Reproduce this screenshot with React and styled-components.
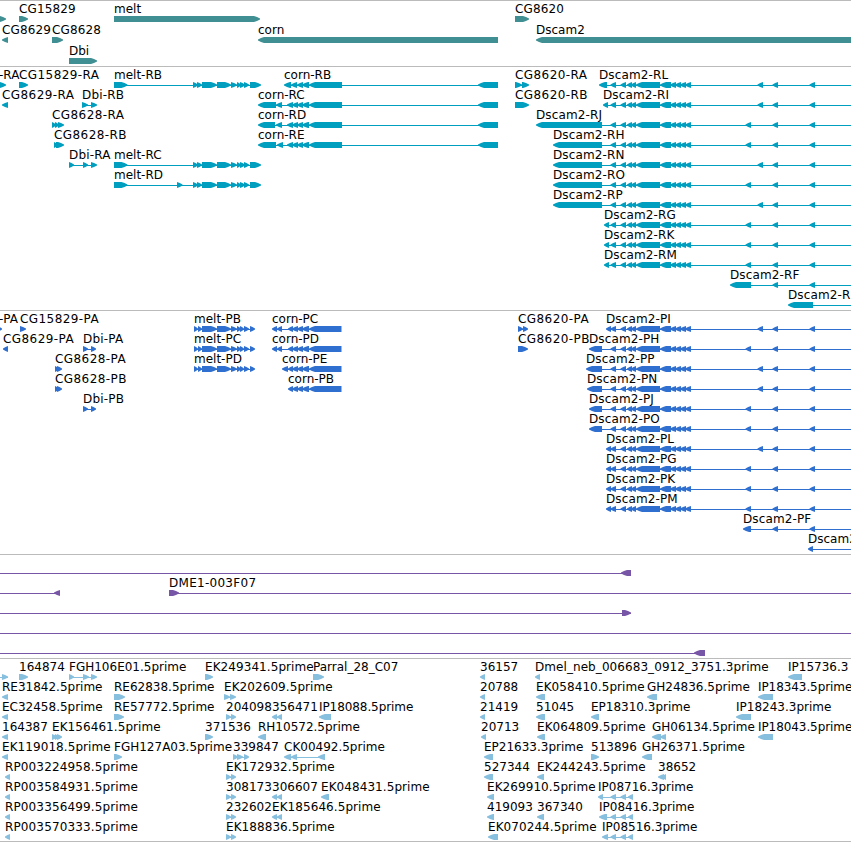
import React from "react";
import styled, { createGlobalStyle } from "styled-components";

const WIDTH = 851;

// shared exon groups, [start, end] in view pixels
const meltTail = [[193, 198], [197, 202], [202, 217], [217, 231], [231, 237], [237, 241], [240, 245], [244, 249], [250, 261]];
const meltCds = [[194, 198], [198, 202], [202, 217], [217, 231], [231, 237], [237, 241], [240, 244], [244, 249], [250, 255]];
const cornBody = [[297, 303], [302, 309], [309, 342]];
const cornTail = [[287, 293], [292, 298], ...cornBody, [478, 498]];
const cornCds = [[288, 293], [292, 298], [297, 303], [302, 309], [309, 341.5]];
const dscamBody = [[620.5, 626], [627, 632], [631, 636], [636, 660], [660, 671], [670, 676], [675, 681], [680, 686], [685, 691]];
const dscamFar = [[772.5, 778], [809.5, 815]];
const dscam = (first, alt) => [...first, [610.5, 616], ...dscamBody, alt ? [757.5, 763] : [745.5, 751], ...dscamFar];
const ip = [[610.5, 616], [620.5, 626], [628, 633]];

// feature: label, start, strand, exons, line end (when it runs past the last exon)
const f = (label, x, dir, exons, to, from) => ({ label, x, dir, exons, to, from });

const tracks = [
    {
        id: "genes",
        color: "#3f8f93",
        rowHeight: 21,
        pad: 2,
        rows: [
            [
                f("", 0, 1, [[-6, 6]]),
                f("CG15829", 19, 1, [[19, 28]]),
                f("melt", 114, 1, [[114, 260]]),
                f("CG8620", 515, 1, [[515, 529]]),
            ],
            [
                f("CG8629", 2, -1, [[2, 8]]),
                f("CG8628", 52, 1, [[52, 63]]),
                f("corn", 258, -1, [[258, 498]]),
                f("Dscam2", 536, -1, [[536, 860]]),
            ],
            [f("Dbi", 69, 1, [[69, 97]])],
        ],
    },
    {
        id: "transcripts",
        color: "#009fbf",
        rowHeight: 20,
        pad: 3,
        rows: [
            [
                f("-RA", -1, 1, [[-4, 6]]),
                f("CG15829-RA", 19, 1, [[19, 28]]),
                f("melt-RB", 114, 1, [[114, 127.5], ...meltTail]),
                f("corn-RB", 284, -1, [[284, 291], [291, 297], ...cornBody, [478, 498]]),
                f("CG8620-RA", 515, 1, [[515, 522], [522, 529]]),
                f("Dscam2-RL", 599, -1, dscam([[599, 607]], true), WIDTH),
            ],
            [
                f("CG8629-RA", 2, -1, [[2, 8]]),
                f("Dbi-RB", 82, 1, [[82, 88], [91, 97]]),
                f("corn-RC", 258, -1, [[258, 276], [276, 282], ...cornTail]),
                f("CG8620-RB", 515, 1, [[515, 529]]),
                f("Dscam2-RI", 603, -1, dscam([[603, 608]], true), WIDTH),
            ],
            [
                f("CG8628-RA", 52, 1, [[52, 56], [55, 59], [58, 64]]),
                f("corn-RD", 258, -1, [[258, 275], [276, 282], ...cornTail]),
                f("Dscam2-RJ", 536, -1, dscam([[536, 602]]), WIDTH),
            ],
            [
                f("CG8628-RB", 54, 1, [[54, 58], [56, 64]]),
                f("corn-RE", 258, -1, [[258, 276], [277, 283], ...cornTail]),
                f("Dscam2-RH", 553, -1, dscam([[553, 602]]), WIDTH),
            ],
            [
                f("Dbi-RA", 69, 1, [[69, 74], [83, 88], [91, 97]]),
                f("melt-RC", 114, 1, [[114, 127.5], ...meltTail]),
                f("Dscam2-RN", 553, -1, dscam([[553, 602]], true), WIDTH),
            ],
            [
                f("melt-RD", 114, 1, [[114, 127.5], [177, 182.5], ...meltTail]),
                f("Dscam2-RO", 553, -1, dscam([[553, 602]]), WIDTH),
            ],
            [f("Dscam2-RP", 553, -1, dscam([[553, 602]], true), WIDTH)],
            [f("Dscam2-RG", 604, -1, dscam([[604, 609]]), WIDTH)],
            [f("Dscam2-RK", 604, -1, dscam([[604, 609]]), WIDTH)],
            [f("Dscam2-RM", 604, -1, dscam([[604, 609]]), WIDTH)],
            [f("Dscam2-RF", 730, -1, [[730, 751], ...dscamFar], WIDTH)],
            [f("Dscam2-R", 788, -1, [[788, 813]], WIDTH)],
        ],
    },
    {
        id: "proteins",
        color: "#2f6fcf",
        rowHeight: 20,
        pad: 3,
        rows: [
            [
                f("-PA", -1, 1, [[-3, 2]]),
                f("CG15829-PA", 20, 1, [[20, 26]]),
                f("melt-PB", 194, 1, meltCds),
                f("corn-PC", 272, -1, [[272, 277], [277, 282], ...cornCds]),
                f("CG8620-PA", 518, 1, [[518, 523], [523, 528]]),
                f("Dscam2-PI", 606, -1, dscam([[606, 611]], true), WIDTH),
            ],
            [
                f("CG8629-PA", 3, -1, [[3, 8]]),
                f("Dbi-PA", 83, 1, [[83, 88], [91, 96]]),
                f("melt-PC", 194, 1, meltCds),
                f("corn-PD", 272, -1, [[272, 277], [277, 282], ...cornCds]),
                f("CG8620-PB", 518, 1, [[518, 528]]),
                f("Dscam2-PH", 589, -1, dscam([[589, 602]]), WIDTH),
            ],
            [
                f("CG8628-PA", 55, 1, [[55, 59], [57, 62]]),
                f("melt-PD", 194, 1, meltCds),
                f("corn-PE", 282, -1, [[282, 288], ...cornCds]),
                f("Dscam2-PP", 586, -1, dscam([[586, 602]], true), WIDTH),
            ],
            [
                f("CG8628-PB", 55, 1, [[55, 59], [57, 62]]),
                f("corn-PB", 288, -1, cornCds),
                f("Dscam2-PN", 587, -1, dscam([[587, 602]], true), WIDTH),
            ],
            [
                f("Dbi-PB", 83, 1, [[83, 88], [91, 96]]),
                f("Dscam2-PJ", 589, -1, dscam([[589, 602]]), WIDTH),
            ],
            [f("Dscam2-PO", 589, -1, dscam([[589, 602]]), WIDTH)],
            [f("Dscam2-PL", 606, -1, dscam([[606, 611]], true), WIDTH)],
            [f("Dscam2-PG", 606, -1, dscam([[606, 611]]), WIDTH)],
            [f("Dscam2-PK", 606, -1, dscam([[606, 611]]), WIDTH)],
            [f("Dscam2-PM", 606, -1, dscam([[606, 611]]), WIDTH)],
            [f("Dscam2-PF", 743, -1, [[743, 751], ...dscamFar], WIDTH)],
            [f("Dscam2", 808, -1, [[808, 813]], WIDTH)],
        ],
    },
    {
        id: "bacs",
        color: "#7755a7",
        rowHeight: 20,
        pad: 3,
        rows: [
            [f("", 0, -1, [[621, 631]], 631, 0)],
            [
                f("", 0, -1, [[54, 60]], 60, 0),
                f("DME1-003F07", 169, 1, [[169, 179]], WIDTH),
            ],
            [f("", 0, 1, [[622, 631]], 631, 0)],
            [f("", 0, 1, [], WIDTH, 0)],
            [f("", 0, -1, [[694, 705]], 705, 0)],
        ],
    },
    {
        id: "ests",
        color: "#87bfdf",
        rowHeight: 20,
        pad: 2,
        rows: [
            [
                f("", 0, 1, [[2, 8]], 8, 0),
                f("164874", 19, 1, [[19, 28]]),
                f("FGH106E01.5prime", 69, 1, [[69, 74], [83, 89], [91, 97]]),
                f("EK249341.5prime", 205, 1, [[205, 213]]),
                f("Parral_28_C07", 313, 1, [[313, 324]]),
                f("36157", 480, -1, [[480, 485]]),
                f("Dmel_neb_006683_0912_3751.3prime", 535, -1, [[535, 540]]),
                f("IP15736.3", 788, -1, [[788, 802]]),
            ],
            [
                f("RE31842.5prime", 2, -1, [[2, 8]]),
                f("RE62838.5prime", 114, 1, [[114, 125]]),
                f("EK202609.5prime", 224, 1, [[224, 230], [230, 236]]),
                f("20788", 480, -1, [[480, 485]]),
                f("EK058410.5prime", 536, -1, [[536, 545]]),
                f("GH24836.5prime", 647, -1, [[647, 657]]),
                f("IP18343.5prime", 758, -1, [[758, 773]]),
            ],
            [
                f("EC32458.5prime", 2, -1, [[2, 8]]),
                f("RE57772.5prime", 114, 1, [[114, 124]]),
                f("204098", 226, 1, [[226, 231], [231, 236]]),
                f("356471", 272, -1, [[272, 277], [277, 282]]),
                f("IP18088.5prime", 319, -1, [[319, 331]]),
                f("21419", 480, -1, [[480, 485]]),
                f("51045", 536, -1, [[536, 545]]),
                f("EP18310.3prime", 591, -1, [[591, 599]]),
                f("IP18243.3prime", 736, -1, [[736, 751]]),
            ],
            [
                f("164387", 2, -1, [[2, 8]]),
                f("EK156461.5prime", 52, 1, [[52, 57], [55, 59], [57, 62]]),
                f("371536", 205, 1, [[205, 213]]),
                f("RH10572.5prime", 258, -1, [[258, 266]]),
                f("20713", 481, -1, [[481, 486]]),
                f("EK064809.5prime", 537, -1, [[537, 545]]),
                f("GH06134.5prime", 652, -1, [[652, 661], [660, 666]]),
                f("IP18043.5prime", 758, -1, [[758, 773]]),
            ],
            [
                f("EK119018.5prime", 2, -1, [[2, 8]]),
                f("FGH127A03.5prime", 114, 1, [[114, 122]]),
                f("339847", 233, 1, [[233, 238], [237, 243], [244, 249]]),
                f("CK00492.5prime", 284, -1, [[284, 291], [291, 297], [318, 325]]),
                f("EP21633.3prime", 484, -1, [[484, 493]]),
                f("513896", 591, 1, [[591, 599]]),
                f("GH26371.5prime", 642, -1, [[642, 652]]),
            ],
            [
                f("RP003224958.5prime", 5, -1, [[5, 10]]),
                f("EK172932.5prime", 226, 1, [[226, 231], [231, 236]]),
                f("527344", 484, -1, [[484, 493]]),
                f("EK244243.5prime", 537, -1, [[537, 544]]),
                f("38652", 658, -1, [[658, 664], [662, 666]]),
            ],
            [
                f("RP003584931.5prime", 5, -1, [[5, 10]]),
                f("308173", 226, 1, [[226, 231], [231, 236]]),
                f("306607", 272, -1, [[272, 277], [277, 282]]),
                f("EK048431.5prime", 321, -1, [[321, 329]]),
                f("EK269910.5prime", 487, -1, [[487, 494]]),
                f("IP08716.3prime", 598, -1, [[598, 603], ...ip]),
            ],
            [
                f("RP003356499.5prime", 5, -1, [[5, 10]]),
                f("232602", 226, 1, [[226, 231], [231, 236]]),
                f("EK185646.5prime", 272, -1, [[272, 277], [277, 282]]),
                f("419093", 487, -1, [[487, 494]]),
                f("367340", 537, -1, [[537, 544]]),
                f("IP08416.3prime", 599, -1, [[599, 607], ...ip]),
            ],
            [
                f("RP003570333.5prime", 5, -1, [[5, 10]]),
                f("EK188836.5prime", 226, 1, [[226, 231], [231, 236]]),
                f("EK070244.5prime", 488, -1, [[488, 498]]),
                f("IP08516.3prime", 602, -1, [[602, 608], ...ip]),
            ],
        ],
    },
];

const tracking = (label) => {
    if (/^CG\d+-/.test(label)) return 0.42;
    if (/^CG/.test(label)) return 0.12;
    if (/^Dscam2-/.test(label)) return 0.12;
    if (/^DME1/.test(label)) return 0.28;
    if (/^Dbi-/.test(label)) return 0.2;
    if (/^RP/.test(label)) return 0.13;
    if (/^(EK|Dmel)/.test(label)) return 0.07;
    if (/^IP18[03]/.test(label)) return -0.08;
    return 0;
};

const exonPoints = ([a, b], dir) => {
    const tip = dir > 0 ? b : a;
    const tail = dir > 0 ? a : b;
    const head = Math.min(6, b - a) * dir;
    const neck = tip - head;
    const mid = tip - head * 0.5;
    return `${tail},0 ${neck},0 ${mid},1 ${tip},2.6 ${tip},3.4 ${mid},5 ${neck},6 ${tail},6`;
};

const Glyph = ({ feature }) => {
    const { exons, dir, to, from } = feature;
    const start = from ?? exons[0][0] + 1;
    const end = to ?? exons[exons.length - 1][1] - 1;
    return (
        <g>
            {(to || exons.length > 1) && <rect x={start} y="3" width={end - start} height="1" />}
            {exons.map((e, i) => (
                <polygon key={i} points={exonPoints(e, dir)} />
            ))}
        </g>
    );
};

const App = () => {
    return (
        <Browser>
            <GlobalStyle />
            {tracks.map((t) => (
                <Track key={t.id} $pad={t.pad}>
                    {t.rows.map((row, i) => (
                        <Row key={i} $height={t.rowHeight}>
                            <Labels>
                                {row.filter((x) => x.label).map((x) => (
                                    <Label key={x.label} $tracking={tracking(x.label)} style={{ left: x.x }}>
                                        {x.label}
                                    </Label>
                                ))}
                            </Labels>
                            <Features $color={t.color} width={WIDTH} height="6">
                                {row.map((x, n) => (
                                    <Glyph key={n} feature={x} />
                                ))}
                            </Features>
                        </Row>
                    ))}
                </Track>
            ))}
        </Browser>
    );
};

export default App;

const GlobalStyle = createGlobalStyle`
    body {
        margin: 0;
        background: #fff;
    }
`;
const Browser = styled.div`
    width: ${WIDTH}px;
    overflow: hidden;
    display: flex;
    flex-direction: column;
    border-bottom: 1px solid #bbb;
    font-family: "DejaVu Sans", sans-serif;
    font-size: 12px;
    color: #000;
`;
const Track = styled.div`
    display: flex;
    flex-direction: column;
    border-top: 1px solid #bbb;
    padding-bottom: ${(p) => p.$pad}px;
`;
const Row = styled.div`
    display: flex;
    flex-direction: column;
    height: ${(p) => p.$height}px;
`;
const Labels = styled.div`
    position: relative;
    height: 15px;
    flex-shrink: 0;
`;
/* labels sit at the genome position of their feature */
const Label = styled.span`
    position: absolute;
    top: 0;
    line-height: 17px;
    letter-spacing: ${(p) => p.$tracking}px;
    white-space: pre;
`;
const Features = styled.svg`
    display: block;
    flex-shrink: 0;
    fill: ${(p) => p.$color};
`;
